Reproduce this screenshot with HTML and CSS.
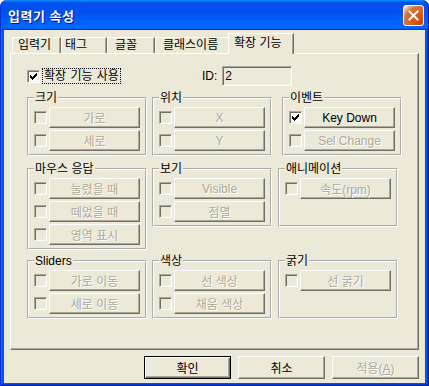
FILE: index.html
```html
<!DOCTYPE html>
<html lang="ko">
<head>
    <meta charset="UTF-8">
    <meta name="viewport" content="width=device-width, initial-scale=1.0">
    <title>입력기 속성</title>
    <link rel="stylesheet" href="styles.css">
</head>
<body>
    <div class="window">
        <div class="title-bar">
            <span class="title">입력기 속성</span>
            <button class="close-btn" aria-label="닫기">
                <svg width="11" height="11" viewBox="0 0 11 11"><path d="M1.5 1.5L9.5 9.5M9.5 1.5L1.5 9.5" stroke="#fff" stroke-width="2" stroke-linecap="square"/></svg>
            </button>
        </div>
        <div class="frame">
            <div class="client">
                <div class="tabs">
                    <div class="tab tab-1">입력기</div>
                    <div class="tab tab-2">태그</div>
                    <div class="tab tab-3">글꼴</div>
                    <div class="tab tab-4">클래스이름</div>
                    <div class="tab active">확장 기능</div>
                </div>
                <div class="panel">
                    <div class="top-row">
                        <div class="enable">
                            <span class="check on"><svg width="11" height="11" viewBox="0 0 11 11"><path d="M8 2h1v1H8zM7 3h2v1H7zM2 4h1v1H2zM6 4h3v1H6zM2 5h2v1H2zM5 5h3v1H5zM2 6h5v1H2zM3 7h3v1H3zM4 8h1v1H4z" fill="#000"/></svg></span>
                            <span class="focus-label">확장 기능 사용</span>
                        </div>
                        <span class="id-label">ID:</span>
                        <span class="edit">2</span>
                    </div>

                    <div class="row row-1">
                        <fieldset class="group">
                            <legend>크기</legend>
                            <div class="opt"><span class="check"></span><button class="btn" disabled>가로</button></div>
                            <div class="opt"><span class="check"></span><button class="btn" disabled>세로</button></div>
                        </fieldset>
                        <fieldset class="group">
                            <legend>위치</legend>
                            <div class="opt"><span class="check"></span><button class="btn" disabled>X</button></div>
                            <div class="opt"><span class="check"></span><button class="btn" disabled>Y</button></div>
                        </fieldset>
                        <fieldset class="group">
                            <legend>이벤트</legend>
                            <div class="opt"><span class="check on"><svg width="11" height="11" viewBox="0 0 11 11"><path d="M8 2h1v1H8zM7 3h2v1H7zM2 4h1v1H2zM6 4h3v1H6zM2 5h2v1H2zM5 5h3v1H5zM2 6h5v1H2zM3 7h3v1H3zM4 8h1v1H4z" fill="#000"/></svg></span><button class="btn">Key Down</button></div>
                            <div class="opt"><span class="check"></span><button class="btn" disabled>Sel Change</button></div>
                        </fieldset>
                    </div>

                    <div class="row row-2">
                        <fieldset class="group">
                            <legend>마우스 응답</legend>
                            <div class="opt"><span class="check"></span><button class="btn" disabled>눌렸을 때</button></div>
                            <div class="opt"><span class="check"></span><button class="btn" disabled>떼었을 때</button></div>
                            <div class="opt"><span class="check"></span><button class="btn" disabled>영역 표시</button></div>
                        </fieldset>
                        <fieldset class="group">
                            <legend>보기</legend>
                            <div class="opt"><span class="check"></span><button class="btn" disabled>Visible</button></div>
                            <div class="opt"><span class="check"></span><button class="btn" disabled>점멸</button></div>
                        </fieldset>
                        <fieldset class="group">
                            <legend>애니메이션</legend>
                            <div class="opt"><span class="check"></span><button class="btn" disabled>속도(rpm)</button></div>
                            <div class="opt empty"></div>
                        </fieldset>
                    </div>

                    <div class="row row-3">
                        <fieldset class="group">
                            <legend>Sliders</legend>
                            <div class="opt"><span class="check"></span><button class="btn" disabled>가로 이동</button></div>
                            <div class="opt"><span class="check"></span><button class="btn" disabled>세로 이동</button></div>
                        </fieldset>
                        <fieldset class="group">
                            <legend>색상</legend>
                            <div class="opt"><span class="check"></span><button class="btn" disabled>선 색상</button></div>
                            <div class="opt"><span class="check"></span><button class="btn" disabled>채움 색상</button></div>
                        </fieldset>
                        <fieldset class="group">
                            <legend>굵기</legend>
                            <div class="opt"><span class="check"></span><button class="btn" disabled>선 굵기</button></div>
                            <div class="opt empty"></div>
                        </fieldset>
                    </div>
                </div>
                <div class="actions">
                    <button class="dlg-btn default">확인</button>
                    <button class="dlg-btn">취소</button>
                    <button class="dlg-btn" disabled>적용(<u>A</u>)</button>
                </div>
            </div>
        </div>
    </div>
</body>
</html>
```

FILE: styles.css
```css
* {
    box-sizing: border-box;
}
body {
    margin: 0;
    background: #fff;
    font: 12px "Liberation Sans", "Noto Sans CJK KR", sans-serif;
    color: #000;
}
.window {
    width: 429px;
    height: 386px;
    display: flex;
    flex-direction: column;
}
.title-bar {
    height: 30px;
    display: flex;
    align-items: center;
    justify-content: space-between;
    padding: 0 5px 0 8px;
    border-radius: 7px 7px 0 0;
    background: linear-gradient(180deg, #0997ff, #0053ee 8%, #0050ee 40%, #06f 88%, #06f 93%, #005bff 95%, #003dd7 96%, #003dd7);
    box-shadow: inset 1px 0 #0831d9, inset -1px 0 #001ea0;
}
.title {
    color: #fff;
    font-weight: bold;
    font-size: 13px;
    letter-spacing: 0.5px;
    text-shadow: 1px 1px #0f1089;
}
.close-btn {
    width: 21px;
    height: 21px;
    padding: 0;
    border: 1px solid #fff;
    border-radius: 3px;
    background: radial-gradient(circle at 90% 90%, #cc4600 0%, #dc6527 55%, #cd7546 70%, #ffccb2 90%, #fff 100%);
    background-color: #e0582f;
    display: flex;
    align-items: center;
    justify-content: center;
}
.close-btn svg {
    display: block;
}
.frame {
    flex: 1;
    padding: 0 4px 3px;
    background: #0054e3;
    box-shadow: inset 1px 0 #0831d9, inset -1px 0 #001ea0, inset 0 -1px #001ea0,
        inset 2px 0 #166aee, inset -2px 0 #003bda, inset 0 -2px #003bda;
}
.client {
    height: 100%;
    background: #ece9d8;
    padding: 3px 6px 4px;
    display: flex;
    flex-direction: column;
}

/* tabs */
.tabs {
    display: flex;
    align-items: flex-end;
    height: 20px;
    padding-left: 2px;
}
.tab {
    height: 16px;
    line-height: 15px;
    border-top: 1px solid #fff;
    border-left: 1px solid #fff;
    border-right: 1px solid #716f64;
    box-shadow: inset -1px 0 #aca899;
    white-space: nowrap;
}
.tab-1 { width: 49px; padding-left: 5px; }
.tab-2 { width: 46px; padding-left: 3px; }
.tab-3 { width: 48px; padding-left: 7px; }
.tab-4 { width: 75px; padding-left: 7px; }
.tab.active {
    position: relative;
    z-index: 1;
    width: 66px;
    height: 21px;
    margin: 0 0 -1px -2px;
    padding: 2px 0 0 5px;
    background: #ece9d8;
}
.panel {
    height: 297px;
    border: 1px solid;
    border-color: #fff #716f64 #716f64 #fff;
    box-shadow: inset -1px -1px #aca899;
    padding: 12px 0 0 16px;
}

/* top row */
.top-row {
    display: flex;
    align-items: center;
    height: 20px;
}
.enable {
    width: 175px;
    display: flex;
    align-items: center;
}
.focus-label {
    margin-left: 2px;
    padding: 0 1px;
    border: 1px dotted #000;
    line-height: 14px;
    word-spacing: 1px;
}
.edit {
    margin-left: 5px;
    width: 70px;
    height: 20px;
    padding-left: 2px;
    line-height: 18px;
    border: 1px solid;
    border-color: #aca899 #fff #fff #aca899;
    box-shadow: inset 1px 1px #716f64, inset -1px -1px #f1efe2;
}

/* check box */
.check {
    flex: none;
    width: 13px;
    height: 13px;
    border: 1px solid;
    border-color: #aca899 #fff #fff #aca899;
    box-shadow: inset 1px 1px #716f64, inset -1px -1px #f1efe2;
    background: #ece9d8;
}
.check.on {
    background: #fff;
}
.check svg {
    display: block;
}

/* group boxes */
.row {
    display: flex;
    align-items: flex-start;
}
.row-1 { margin-top: 5px; }
.row-2 { margin-top: 6px; }
.row-3 { margin-top: 4px; }
.group {
    width: 120px;
    min-width: 0;
    margin: 0;
    padding: 2px 5px 3px;
    border: 2px groove #fff;
}
.group + .group {
    margin-left: 5px;
}
.row-1 .group:last-child {
    margin-left: 10px;
}
.row-2 .group:last-child,
.row-3 .group:last-child {
    margin-left: 6px;
}
.group legend {
    padding: 0 1px;
    line-height: 14px;
}
.opt {
    display: flex;
    align-items: center;
    gap: 2px;
    height: 21px;
}
.opt + .opt {
    margin-top: 2px;
}

/* push buttons */
.btn,
.dlg-btn {
    font: inherit;
    color: #000;
    padding: 0;
    background: #ece9d8;
    border: 1px solid;
    border-color: #fff #716f64 #716f64 #fff;
    box-shadow: inset -1px -1px #aca899;
    white-space: nowrap;
}
.btn {
    width: 91px;
    height: 21px;
}
.btn:disabled,
.dlg-btn:disabled {
    color: #aca899;
    text-shadow: 1px 1px #fff;
}
.actions {
    display: flex;
    justify-content: flex-end;
    gap: 7px;
    margin-top: 6px;
}
.dlg-btn {
    width: 87px;
    height: 23px;
}
.dlg-btn.default {
    border: 1px solid #000;
    box-shadow: inset 1px 1px #fff, inset -1px -1px #716f64, inset -2px -2px #aca899;
}
```
